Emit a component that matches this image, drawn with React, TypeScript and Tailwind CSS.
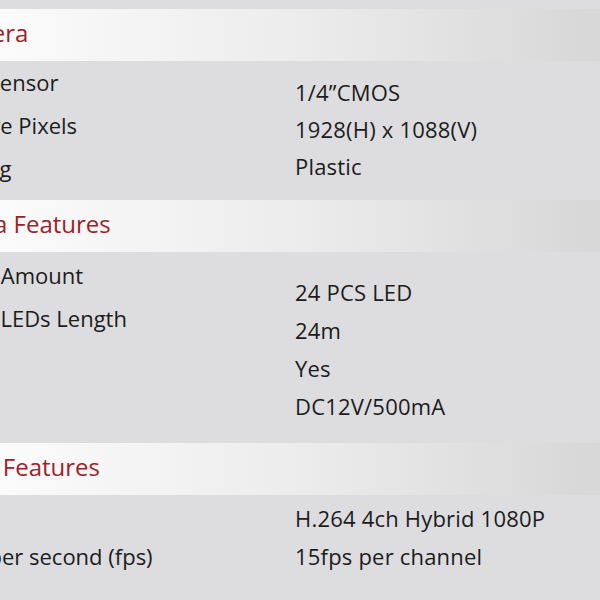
import React from "react";

type Label = { text: string; shift: string };

type Section = {
  title: string;
  titleShift: string;
  bodyHeight: string;
  labelPad: string;
  labelLeading: string;
  valuePad: string;
  valueLeading: string;
  labels: Label[];
  values: string[];
};

// Spec sheet sections; labels are shifted left so the page edge cuts them
const sections: Section[] = [
  {
    title: "Camera",
    titleShift: "-ml-[59px]",
    bodyHeight: "h-[139px]",
    labelPad: "pt-0",
    labelLeading: "leading-[43px]",
    valuePad: "pt-[13px]",
    valueLeading: "leading-[37px]",
    labels: [
      { text: "Image Sensor", shift: "-ml-[81px]" },
      { text: "Effective Pixels", shift: "-ml-[74px]" },
      { text: "Housing", shift: "-ml-[73px]" },
    ],
    values: ["1/4\u201DCMOS", "1928(H) x 1088(V)", "Plastic"],
  },
  {
    title: "Camera Features",
    titleShift: "-ml-[80px]",
    bodyHeight: "h-[191px]",
    labelPad: "pt-[2px]",
    labelLeading: "leading-[43px]",
    valuePad: "pt-[21px]",
    valueLeading: "leading-[38px]",
    labels: [
      { text: "IR LED Amount", shift: "-ml-[70px]" },
      { text: "IR LEDs Length", shift: "-ml-[25px]" },
    ],
    values: ["24 PCS LED", "24m", "Yes", "DC12V/500mA"],
  },
  {
    title: "DVR Features",
    titleShift: "-ml-[50px]",
    bodyHeight: "h-[106px]",
    labelPad: "pt-[42px]",
    labelLeading: "leading-[38px]",
    valuePad: "pt-[4px]",
    valueLeading: "leading-[38px]",
    labels: [{ text: "Frames per second (fps)", shift: "-ml-[93px]" }],
    values: ["H.264 4ch Hybrid 1080P", "15fps per channel"],
  },
];

export default function App() {
  return (
    <div
      className="w-[600px] h-[600px] overflow-hidden bg-[#dddddf] pt-[9px] text-[#1c1c1c]"
      style={{ fontFamily: "'Open Sans', 'Liberation Sans', sans-serif" }}
    >
      {sections.map((section) => (
        <div key={section.title}>
          {/* Section header bar */}
          <div className="h-[52px] pb-[4px] flex items-center overflow-hidden bg-gradient-to-r from-[#fbfbfb] via-[#ececec] to-[#d7d7d8]">
            <span className={`whitespace-nowrap text-[24px] text-[#9e1f29] ${section.titleShift}`}>
              {section.title}
            </span>
          </div>

          {/* Rows */}
          <div className={`flex ${section.bodyHeight}`}>
            <div className={`w-[295px] overflow-hidden flex flex-col text-[22px] ${section.labelPad} ${section.labelLeading}`}>
              {section.labels.map((label) => (
                <span key={label.text} className={`whitespace-nowrap ${label.shift}`}>
                  {label.text}
                </span>
              ))}
            </div>
            <div className={`flex-1 flex flex-col text-[22px] tracking-[0.2px] ${section.valuePad} ${section.valueLeading}`}>
              {section.values.map((value) => (
                <span key={value} className="whitespace-nowrap">
                  {value}
                </span>
              ))}
            </div>
          </div>
        </div>
      ))}
    </div>
  );
}
